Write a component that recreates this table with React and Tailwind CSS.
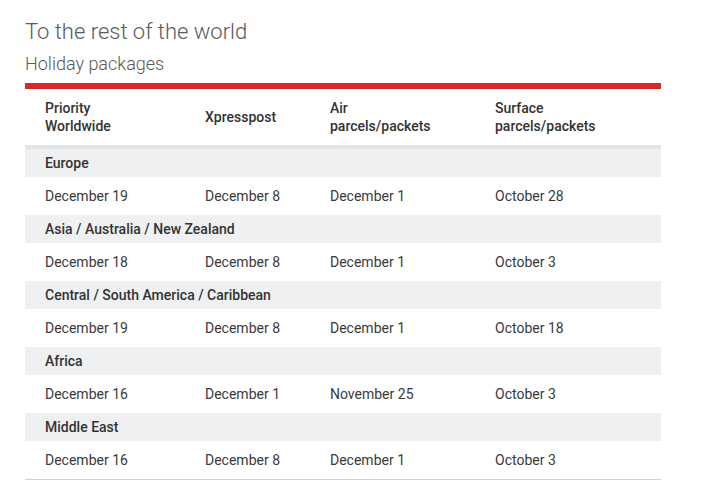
import React from "react";

const regions = [
  { name: "Europe", d: ["December 19", "December 8", "December 1", "October 28"] },
  { name: "Asia / Australia / New Zealand", d: ["December 18", "December 8", "December 1", "October 3"] },
  { name: "Central / South America / Caribbean", d: ["December 19", "December 8", "December 1", "October 18"] },
  { name: "Africa", d: ["December 16", "December 1", "November 25", "October 3"] },
  { name: "Middle East", d: ["December 16", "December 8", "December 1", "October 3"] },
];

const widths = ["w-[180px]", "w-[125px]", "w-[165px]", "flex-1"];

export default function App() {
  return (
    <div className="bg-white w-[724px] h-[483px] overflow-hidden text-[#333]" style={{ fontFamily: "Roboto, 'Liberation Sans', sans-serif" }}>
      <div className="pl-[25px] pt-[19px] w-[661px]">
        <h1 className="text-[22px] font-light leading-[26px] text-[#5a5a5a]">To the rest of the world</h1>
        <h2 className="mt-[8px] text-[18px] font-light leading-[22px] text-[#5a5a5a]">Holiday packages</h2>
        <div className="mt-[8px] h-[6px] bg-[#d52b27]" />
        <div className="flex items-center h-[60px] border-b-4 border-[#e3e4e6] text-[14px] font-medium leading-[18px]">
          <div className={`${widths[0]} pl-[20px]`}>Priority<br />Worldwide</div>
          <div className={widths[1]}>Xpresspost</div>
          <div className={widths[2]}>Air<br />parcels/packets</div>
          <div className={widths[3]}>Surface<br />parcels/packets</div>
        </div>
        {regions.map((r) => (
          <div key={r.name}>
            <div className="h-[28px] bg-[#eff0f1] flex items-center pl-[20px] text-[14px] font-medium">{r.name}</div>
            <div className="h-[38px] flex items-center text-[14px] text-[#3a3a3a]">
              <div className={`${widths[0]} pl-[20px]`}>{r.d[0]}</div>
              <div className={widths[1]}>{r.d[1]}</div>
              <div className={widths[2]}>{r.d[2]}</div>
              <div className={widths[3]}>{r.d[3]}</div>
            </div>
          </div>
        ))}
        <div className="h-px bg-[#d0d0d0]" />
      </div>
    </div>
  );
}
